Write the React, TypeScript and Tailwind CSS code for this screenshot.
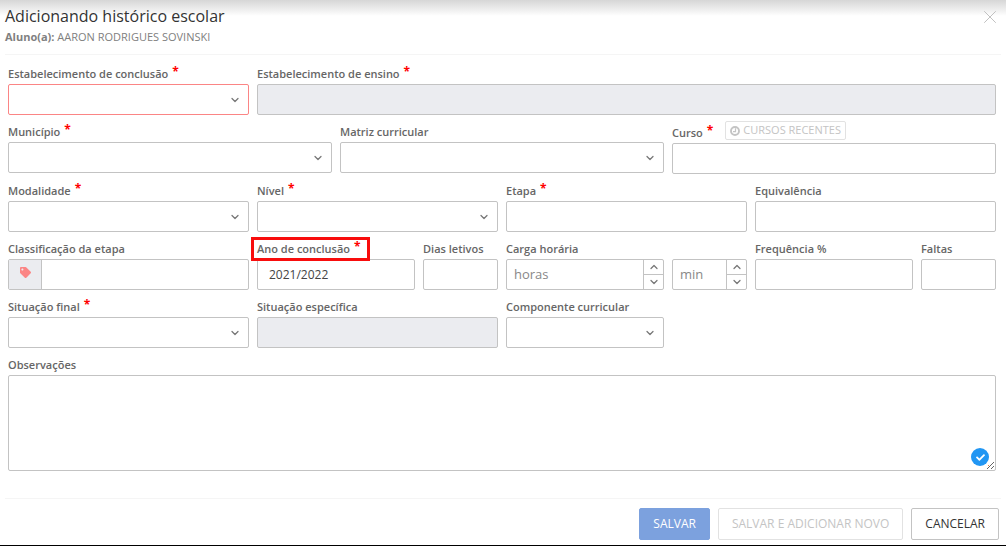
import { useId, type ReactNode } from 'react'
import { ChevronDown, ChevronUp, X } from 'lucide-react'
import { FaCheck, FaTag } from 'react-icons/fa'

const control = 'h-[31px] w-full min-w-0 rounded-xs border border-[#c3c3c3] px-[11px] text-xs text-[#444444] outline-none placeholder:text-[#888888]'

type FieldProps = {
	label: string
	className: string
	required?: boolean
	highlighted?: boolean
	extra?: ReactNode
	children: (id: string) => ReactNode
}

function Field({ label, className, required, highlighted, extra, children }: FieldProps) {
	const id = useId()

	return (
		<div className={`min-w-0 ${className}`}>
			<div className="flex items-end gap-3">
				<label htmlFor={id} className="relative flex h-[19px] pt-px text-[11px] leading-4 font-semibold whitespace-nowrap text-[#666666]">
					{label}
					{required && <span className="ml-1 -mt-[2px] text-xs leading-4 font-bold text-[#ff0000]">*</span>}
					{highlighted && <span className="pointer-events-none absolute -top-[3px] -right-[9px] -bottom-[2px] -left-[6px] border-3 border-[#f80d0d]" />}
				</label>
				{extra}
			</div>
			{children(id)}
		</div>
	)
}

function Input({ id, disabled, value }: { id: string; disabled?: boolean; value?: string }) {
	return (
		<input
			id={id}
			type="text"
			disabled={disabled}
			defaultValue={value}
			className={`${control} disabled:bg-[#ebecf0]`}
		/>
	)
}

function Select({ id, invalid }: { id: string; invalid?: boolean }) {
	return (
		<div className="relative">
			<select id={id} className={`${control} appearance-none bg-white ${invalid ? 'border-[#fb8585]' : ''}`}>
				<option value=""></option>
			</select>
			<ChevronDown size={12} strokeWidth={2.5} className="pointer-events-none absolute top-[10px] right-2 text-[#777777]" />
		</div>
	)
}

function Spinner({ id, placeholder }: { id?: string; placeholder: string }) {
	return (
		<div className="flex h-[31px] overflow-hidden rounded-xs border border-[#c3c3c3]">
			<input
				id={id}
				type="text"
				aria-label={placeholder}
				placeholder={placeholder}
				className="w-0 min-w-0 flex-1 px-[7px] text-[13px] text-[#444444] outline-none placeholder:text-[#888888]"
			/>
			<div className="flex w-5 flex-col divide-y divide-[#c3c3c3] border-l border-[#c3c3c3] text-[#777777]">
				<button type="button" aria-label="Aumentar" className="flex flex-1 items-center justify-center">
					<ChevronUp size={12} strokeWidth={2.5} />
				</button>
				<button type="button" aria-label="Diminuir" className="flex flex-1 items-center justify-center">
					<ChevronDown size={12} strokeWidth={2.5} />
				</button>
			</div>
		</div>
	)
}

function ClockIcon() {
	return (
		<svg width="10" height="10" viewBox="0 0 10 10" fill="none" stroke="currentColor" aria-hidden="true">
			<circle cx="5" cy="5" r="4" strokeWidth="1.9" />
			<path d="M5.5 2.2v3.4H3" strokeWidth="1.2" />
		</svg>
	)
}

export default function App() {
	return (
		<div className="bg-white font-['Open_Sans','Noto_Sans',sans-serif]">
			{/* Cabeçalho */}
			<header className="bg-linear-to-b from-[#d6d6d6] to-white to-[16px] px-[5px]">
				<div className="flex h-[55px] items-start justify-between border-b border-[#f5f5f5] pt-[5px]">
					<div>
						<h1 className="text-base leading-[22px] text-[#333333]">Adicionando histórico escolar</h1>
						<p className="text-[11px] leading-5 text-[#808080]">
							<strong>Aluno(a):</strong> AARON RODRIGUES SOVINSKI
						</p>
					</div>
					<button type="button" aria-label="Fechar" className="pt-px text-[#bbbbbb]">
						<X size={22} strokeWidth={1} />
					</button>
				</div>
			</header>

			{/* Formulário */}
			<form>
				<div className="grid grid-cols-12 gap-2 pt-[10px] pr-[10px] pl-2">
					<Field label="Estabelecimento de conclusão" className="col-span-3" required>
						{id => <Select id={id} invalid />}
					</Field>
					<Field label="Estabelecimento de ensino" className="col-span-9" required>
						{id => <Input id={id} disabled />}
					</Field>

					<Field label="Município" className="col-span-4" required>
						{id => <Select id={id} />}
					</Field>
					<Field label="Matriz curricular" className="col-span-4">
						{id => <Select id={id} />}
					</Field>
					<Field
						label="Curso"
						className="col-span-4"
						required
						extra={
							<button
								type="button"
								disabled
								className="-mt-[2px] mb-[3px] flex h-[19px] items-center gap-[3px] rounded-xs border border-[#e2e2e2] px-1 text-[11px] text-[#c4c4c4]"
							>
								<ClockIcon />
								CURSOS RECENTES
							</button>
						}
					>
						{id => <Input id={id} />}
					</Field>

					<Field label="Modalidade" className="col-span-3" required>
						{id => <Select id={id} />}
					</Field>
					<Field label="Nível" className="col-span-3" required>
						{id => <Select id={id} />}
					</Field>
					<Field label="Etapa" className="col-span-3" required>
						{id => <Input id={id} />}
					</Field>
					<Field label="Equivalência" className="col-span-3">
						{id => <Input id={id} />}
					</Field>

					<Field label="Classificação da etapa" className="col-span-3">
						{id => (
							<div className="flex h-[31px] overflow-hidden rounded-xs border border-[#c3c3c3]">
								<span className="flex w-[33px] items-center justify-center border-r border-[#c3c3c3] bg-[#ebecf0] pb-1 text-[#fb8585]">
									<FaTag size={11} />
								</span>
								<input id={id} type="text" className="min-w-0 flex-1 px-[11px] text-xs outline-none" />
							</div>
						)}
					</Field>
					<Field label="Ano de conclusão" className="col-span-2" required highlighted>
						{id => <Input id={id} value="2021/2022" />}
					</Field>
					<Field label="Dias letivos" className="col-span-1">
						{id => <Input id={id} />}
					</Field>
					<Field label="Carga horária" className="col-span-2">
						{id => <Spinner id={id} placeholder="horas" />}
					</Field>
					<div className="col-span-1 flex flex-col justify-end">
						<Spinner placeholder="min" />
					</div>
					<Field label="Frequência %" className="col-span-2">
						{id => <Input id={id} />}
					</Field>
					<Field label="Faltas" className="col-span-1">
						{id => <Input id={id} />}
					</Field>

					<Field label="Situação final" className="col-span-3" required>
						{id => <Select id={id} />}
					</Field>
					<Field label="Situação específica" className="col-span-3">
						{id => <Input id={id} disabled />}
					</Field>
					<Field label="Componente curricular" className="col-span-2">
						{id => <Select id={id} />}
					</Field>

					<Field label="Observações" className="col-span-12">
						{id => (
							<div className="relative">
								<textarea id={id} className="block h-24 w-full rounded-xs border border-[#c3c3c3] px-[11px] py-2 text-xs outline-none" />
								<span className="pointer-events-none absolute right-[7px] bottom-[5px] flex size-[18px] items-center justify-center rounded-full bg-[#2196f3] text-white">
									<FaCheck size={9} />
									<span className="absolute right-0 bottom-0 size-px bg-[#f5873b]" />
								</span>
							</div>
						)}
					</Field>
				</div>

				{/* Rodapé */}
				<div className="px-[5px] pt-[27px]">
					<div className="flex justify-end gap-2 border-t border-[#f5f5f5] pt-[9px] pr-[2px] pb-[5px] text-xs">
						<button type="submit" disabled className="h-8 rounded-xs border border-[#7ca1de] bg-[#7ca1de] px-[13px] text-white">
							SALVAR
						</button>
						<button type="button" disabled className="h-8 rounded-xs border border-[#e2e2e2] px-[13px] text-[#c4c4c4]">
							SALVAR E ADICIONAR NOVO
						</button>
						<button type="button" className="h-8 rounded-xs border border-[#c3c3c3] px-[13px] text-[#333333]">
							CANCELAR
						</button>
					</div>
				</div>
			</form>
			<div className="h-px bg-black" />
		</div>
	)
}
